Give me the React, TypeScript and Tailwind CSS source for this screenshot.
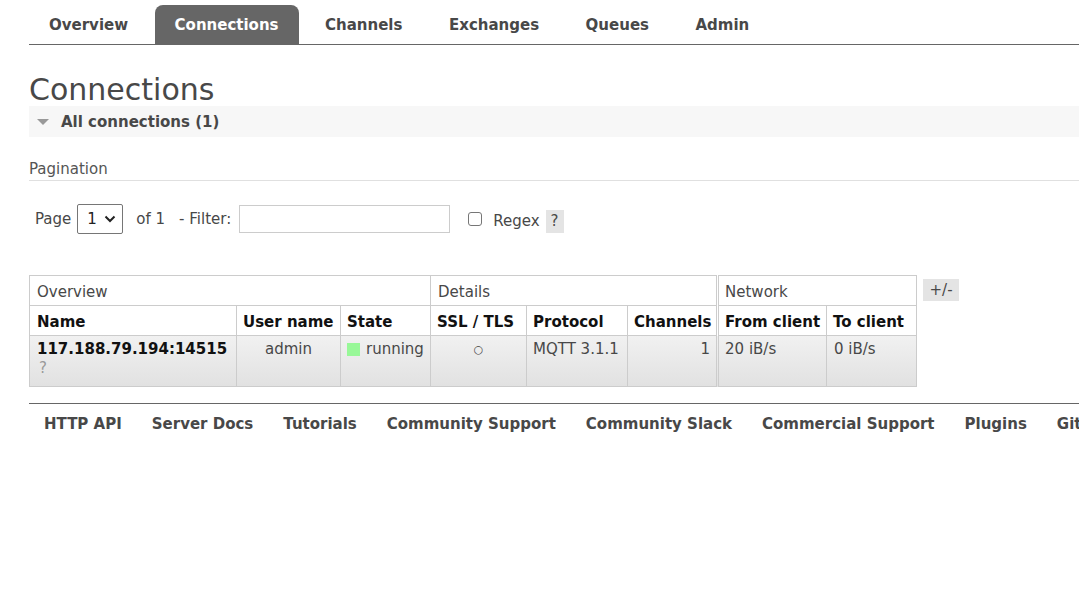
import React from "react";

const tabs = ["Overview", "Connections", "Channels", "Exchanges", "Queues", "Admin"];
const footer = [
  "HTTP API",
  "Server Docs",
  "Tutorials",
  "Community Support",
  "Community Slack",
  "Commercial Support",
  "Plugins",
  "GitHub",
];

export default function App() {
  return (
    <div
      className="w-[1079px] h-[596px] overflow-hidden bg-white text-[15px] text-[#484848]"
      style={{ fontFamily: '"DejaVu Sans", Verdana, sans-serif' }}
    >
      {/* nav */}
      <div className="ml-[29px] pt-[5px] flex items-end gap-[6.5px] border-b border-[#666] whitespace-nowrap">
        {tabs.map((t) => (
          <div
            key={t}
            className={
              t === "Connections"
                ? "h-[39px] px-[20px] pt-[2px] flex items-center font-bold bg-[#666] text-white rounded-t-[8px]"
                : "h-[39px] px-[20px] pt-[2px] flex items-center font-bold text-[#484848]"
            }
          >
            {t}
          </div>
        ))}
      </div>

      <div className="ml-[29px]">
        <h1 className="mt-[29px] h-[32px] leading-[32px] text-[30px] text-[#484848]">Connections</h1>

        <div className="h-[31px] bg-[#f7f7f7] flex items-center">
          <svg width="12" height="8" viewBox="0 0 12 8" className="ml-[8px] mt-[1px]">
            <polygon points="0,1 12,1 6,7" fill="#999" />
          </svg>
          <span className="ml-[12px] pt-[2px] font-bold text-[#484848]">All connections (1)</span>
        </div>

        <div className="mt-[23px] leading-[18px] pb-[2px] border-b border-[#e0e0e0] text-[#555]">Pagination</div>

        <div className="mt-[23px] ml-[6px] flex items-center h-[30px] whitespace-nowrap">
          <span>Page</span>
          <div className="ml-[6px] w-[46px] h-[30px] border border-[#767676] rounded-[2px] flex items-center justify-between pl-[9px] pr-[6px] text-[#222]">
            <span>1</span>
            <svg width="12" height="8" viewBox="0 0 12 8">
              <path d="M1.5 1.5 L6 6 L10.5 1.5" fill="none" stroke="#222" strokeWidth="2" />
            </svg>
          </div>
          <span className="ml-[13px]">of 1</span>
          <span className="ml-[14px]">- Filter:</span>
          <div className="ml-[8px] w-[211px] h-[28px] border border-[#ccc]" />
          <div className="ml-[18px] w-[14px] h-[14px] border border-[#767676] rounded-[3px]" />
          <span className="ml-[11px] mt-[4px]">Regex</span>
          <span className="ml-[6px] mt-[4px] w-[18px] text-center h-[23px] leading-[23px] bg-[#e4e4e4]">?</span>
        </div>

        <div className="mt-[41px] flex items-start">
          <table className="table-fixed border-collapse w-[887px]">
            <colgroup>
              <col className="w-[207px]" />
              <col className="w-[104px]" />
              <col className="w-[90px]" />
              <col className="w-[96px]" />
              <col className="w-[101px]" />
              <col className="w-[90px]" />
              <col className="w-[109px]" />
              <col className="w-[90px]" />
            </colgroup>
            <thead>
              <tr className="h-[30px]">
                <th colSpan={3} className="border border-[#ccc] text-left font-normal px-[7px] pt-[2px] leading-[18px]">Overview</th>
                <th colSpan={3} className="border border-[#ccc] text-left font-normal px-[7px] pt-[2px] leading-[18px]">Details</th>
                <th colSpan={2} className="border border-[#ccc] border-l-[3px] border-double text-left font-normal px-[6px] pt-[2px] leading-[18px]">Network</th>
              </tr>
              <tr className="h-[30px] text-[#111] whitespace-nowrap">
                <th className="border border-[#ccc] text-left px-[7px] pt-[3px]">Name</th>
                <th className="border border-[#ccc] text-left px-[6px] pt-[3px]">User name</th>
                <th className="border border-[#ccc] text-left px-[6px] pt-[3px]">State</th>
                <th className="border border-[#ccc] text-left px-[6px] pt-[3px]">SSL / TLS</th>
                <th className="border border-[#ccc] text-left px-[6px] pt-[3px]">Protocol</th>
                <th className="border border-[#ccc] text-left px-[6px] pt-[3px]">Channels</th>
                <th className="border border-[#ccc] border-l-[3px] border-double text-left px-[6px] pt-[3px]">From client</th>
                <th className="border border-[#ccc] text-left px-[6px] pt-[3px]">To client</th>
              </tr>
            </thead>
            <tbody>
              <tr className="h-[51px] bg-gradient-to-b from-[#f1f1f1] to-[#e1e1e1] align-top leading-[18px] whitespace-nowrap">
                <td className="border border-[#ccc] px-[7px] pt-[4px]">
                  <div className="font-bold text-[#111]">117.188.79.194:14515</div>
                  <div className="text-[#999] mt-[1px] ml-[2px]">?</div>
                </td>
                <td className="border border-[#ccc] text-center pt-[4px]">admin</td>
                <td className="border border-[#ccc] px-[6px] pt-[4px]">
                  <div className="flex items-center">
                    <span className="w-[13px] h-[13px] bg-[#98f898] inline-block" />
                    <span className="ml-[6px]">running</span>
                  </div>
                </td>
                <td className="border border-[#ccc] text-center pt-[4px] text-[11px] leading-[20px]">○</td>
                <td className="border border-[#ccc] px-[6px] pt-[4px]">MQTT 3.1.1</td>
                <td className="border border-[#ccc] px-[6px] pt-[4px] text-right">1</td>
                <td className="border border-[#ccc] border-l-[3px] border-double px-[6px] pt-[4px]">20 iB/s</td>
                <td className="border border-[#ccc] px-[7px] pt-[4px]">0 iB/s</td>
              </tr>
            </tbody>
          </table>
          <div className="ml-[6px] mt-[4px] h-[22px] w-[36px] flex items-center justify-center bg-[#e4e4e4]">+/-</div>
        </div>
      </div>

      <div className="ml-[29px] mt-[16px] border-t border-[#666] flex whitespace-nowrap pt-[10px]">
        {footer.map((f, i) => (
          <span key={f} className={(i === 0 ? "pl-[15px]" : "pl-[30px]") + " font-bold text-[#484848] leading-[20px] shrink-0"}>
            {f}
          </span>
        ))}
      </div>
    </div>
  );
}
